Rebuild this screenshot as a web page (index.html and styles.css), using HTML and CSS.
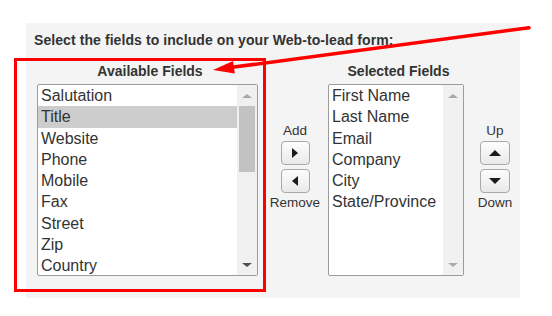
FILE: index.html
```html
<!DOCTYPE html>
<html lang="en">
<head>
<meta charset="utf-8">
<title>Web-to-lead fields</title>
<link rel="stylesheet" href="styles.css">
</head>
<body>
<div class="page">
  <div class="panel">
    <div class="title">Select the fields to include on your Web-to-lead form:</div>
    <div class="cols">
      <div class="col avail">
        <div class="colhead">Available Fields</div>
        <div class="listbox">
          <ul class="items">
            <li>Salutation</li>
            <li class="sel">Title</li>
            <li>Website</li>
            <li>Phone</li>
            <li>Mobile</li>
            <li>Fax</li>
            <li>Street</li>
            <li>Zip</li>
            <li>Country</li>
          </ul>
          <div class="sb">
            <div class="sb-end"><span class="tri-up off"></span></div>
            <div class="thumb"></div>
            <div class="sb-fill"></div>
            <div class="sb-end"><span class="tri-down on"></span></div>
          </div>
        </div>
      </div>
      <div class="ctrl ctrl-mid">
        <div class="lbl">Add</div>
        <button class="btn" type="button" aria-label="Add">
          <svg width="6" height="10" viewBox="0 0 6 10"><polygon points="0,0 6,5 0,10" fill="#1c1c1c"/></svg>
        </button>
        <button class="btn" type="button" aria-label="Remove">
          <svg width="6" height="10" viewBox="0 0 6 10"><polygon points="6,0 0,5 6,10" fill="#1c1c1c"/></svg>
        </button>
        <div class="lbl">Remove</div>
      </div>
      <div class="col selected">
        <div class="colhead">Selected Fields</div>
        <div class="listbox">
          <ul class="items">
            <li>First Name</li>
            <li>Last Name</li>
            <li>Email</li>
            <li>Company</li>
            <li>City</li>
            <li>State/Province</li>
          </ul>
          <div class="sb sb-dis">
            <div class="sb-end"><span class="tri-up off"></span></div>
            <div class="sb-fill"></div>
            <div class="sb-end"><span class="tri-down off"></span></div>
          </div>
        </div>
      </div>
      <div class="ctrl ctrl-right">
        <div class="lbl">Up</div>
        <button class="btn btn-wide" type="button" aria-label="Up">
          <svg width="12" height="6" viewBox="0 0 12 6"><polygon points="0,6 6,0 12,6" fill="#1c1c1c"/></svg>
        </button>
        <button class="btn btn-wide" type="button" aria-label="Down">
          <svg width="12" height="6" viewBox="0 0 12 6"><polygon points="0,0 12,0 6,6" fill="#1c1c1c"/></svg>
        </button>
        <div class="lbl">Down</div>
      </div>
    </div>
  </div>
</div>
<div class="callout"></div>
<svg class="arrow" width="552" height="316" viewBox="0 0 552 316">
  <line x1="529" y1="27.8" x2="230" y2="67.6" stroke="#ff0000" stroke-width="3.5" stroke-linecap="round"/>
  <polygon points="213,70 233,61 234.8,73.4" fill="#ff0000"/>
</svg>
</body>
</html>
```

FILE: styles.css
```css
html, body {
  margin: 0;
  padding: 0;
}
body {
  width: 552px;
  height: 316px;
  overflow: hidden;
  position: relative;
  background: #ffffff;
  font-family: "Liberation Sans", Arial, sans-serif;
  color: #333333;
}
.page {
  padding: 23px 0 0 26px;
}
.panel {
  width: 494px;
  height: 275px;
  box-sizing: border-box;
  background: #f4f4f4;
  padding: 9px 0 0 8px;
}
.title {
  font-weight: bold;
  font-size: 14px;
  line-height: 16px;
  letter-spacing: 0.08px;
  color: #333333;
  white-space: nowrap;
}
.cols {
  display: flex;
  margin-top: 15px;
  padding-left: 3px;
}
.col {
  display: flex;
  flex-direction: column;
  align-items: center;
}
.colhead {
  font-weight: bold;
  font-size: 14px;
  line-height: 16px;
  color: #333333;
  margin-bottom: 5px;
  padding-left: 5px;
}
.listbox {
  display: flex;
  height: 192px;
  box-sizing: border-box;
  border: 1px solid #9b9b9b;
  border-radius: 2px;
  background: #ffffff;
}
.avail .listbox {
  width: 221px;
}
.selected .listbox {
  width: 136px;
}
.items {
  list-style: none;
  margin: 0;
  padding: 0;
  flex: 1;
  overflow: hidden;
}
.items li {
  font-size: 16px;
  line-height: 21.25px;
  padding-left: 3px;
  color: #333333;
  white-space: nowrap;
}
.items li.sel {
  background: #cdcdcd;
}
.sb {
  width: 20px;
  background: #f0f0f0;
  display: flex;
  flex-direction: column;
}
.sb-dis {
  background: #f1f1f1;
}
.sb-end {
  height: 21px;
  display: flex;
  align-items: center;
  justify-content: center;
}
.sb-fill {
  flex: 1;
}
.thumb {
  height: 66px;
  margin: 0 2px;
  background: #c2c2c2;
}
.tri-up, .tri-down {
  width: 0;
  height: 0;
  border-left: 5px solid transparent;
  border-right: 5px solid transparent;
}
.tri-up.off {
  border-bottom: 4px solid #a8a8a8;
}
.tri-down.off {
  border-top: 4px solid #ababab;
}
.tri-down.on {
  border-top: 4px solid #505050;
}
.ctrl {
  display: flex;
  flex-direction: column;
  align-items: center;
  padding-top: 60px;
}
.ctrl-mid {
  width: 66px;
  margin-left: 4px;
}
.ctrl-right {
  width: 50px;
  margin-left: 6px;
}
.lbl {
  font-size: 13.5px;
  line-height: 16px;
  color: #333333;
}
.btn {
  width: 29px;
  height: 24px;
  margin: 2px 0;
  padding: 0;
  border: 1px solid #a9a9a9;
  border-radius: 4px;
  background: linear-gradient(#fdfdfd, #e9e9e9);
  display: flex;
  align-items: center;
  justify-content: center;
}
.btn-wide {
  width: 30px;
}
.callout {
  position: absolute;
  left: 14px;
  top: 58px;
  width: 252px;
  height: 234px;
  box-sizing: border-box;
  border: 3px solid #ff0000;
}
.arrow {
  position: absolute;
  left: 0;
  top: 0;
  pointer-events: none;
}
```
